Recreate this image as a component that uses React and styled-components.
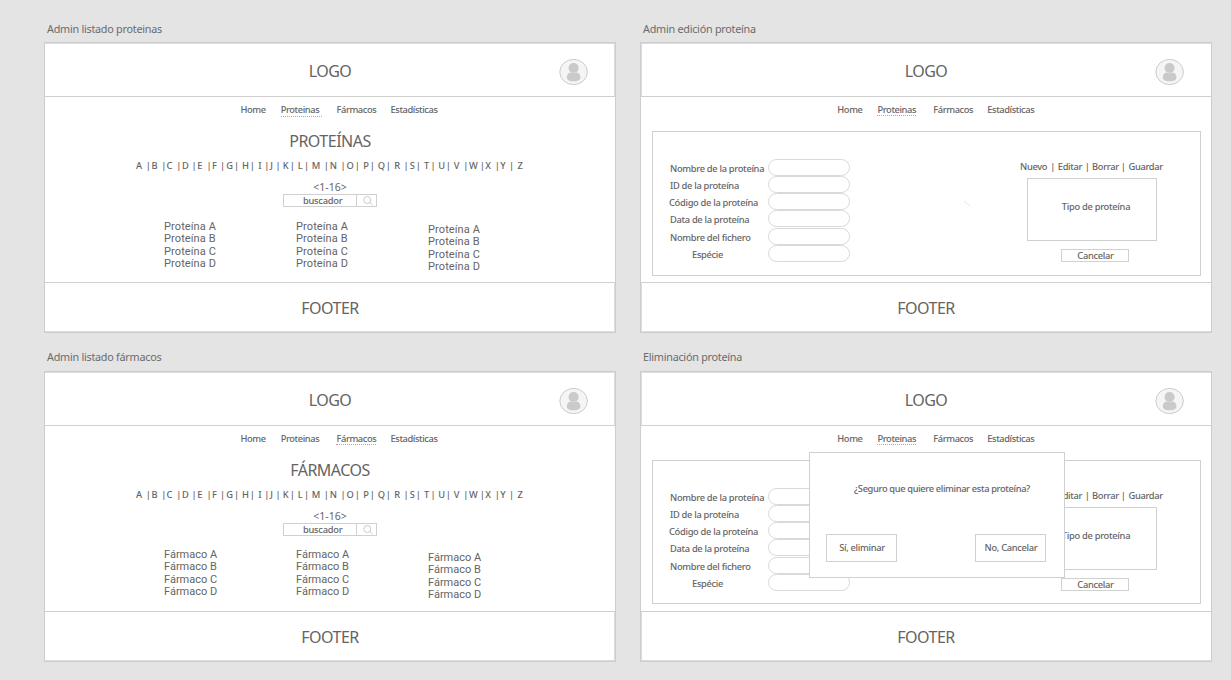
import React from "react";
import styled, { createGlobalStyle } from "styled-components";

const GlobalStyle = createGlobalStyle`
  * { box-sizing: border-box; }
  body {
    margin: 0;
    background: #e4e4e4;
    font-family: "Noto Sans", "Open Sans", sans-serif;
    color: #646464;
    overflow: hidden;
  }
`;

const Board = styled.main`
  display: grid;
  grid-template-columns: 572px 572px;
  grid-template-rows: 329px 329px;
  column-gap: 24px;
  padding: 13px 0 0 44px;
  width: 1231px;
  height: 680px;
`;

const Artboard = styled.section`
  display: flex;
  flex-direction: column;
`;

const Caption = styled.h2`
  margin: 0;
  height: 29px;
  padding-left: 3px;
  font-size: 10.8px;
  font-weight: 400;
  line-height: ${(p) => p.$line || 31}px;
  letter-spacing: -0.25px;
  color: #6b6b6b;
  white-space: nowrap;
`;

const Frame = styled.div`
  position: relative;
  display: flex;
  flex-direction: column;
  height: 291px;
  border: 1px solid #cdcdcd;
  background: #fff;
`;

const Header = styled.header`
  display: grid;
  flex: none;
  grid-template-columns: 1fr 60px 1fr;
  height: 54px;
  padding: 1px 26px 0;
  border-bottom: 1px solid #d0d0d0;
  box-shadow: inset ${(p) => p.$edge}px 1px 0 #dcdcdc;
`;

const Heading = styled.div`
  font-size: 16px;
  line-height: ${(p) => p.$line}px;
  letter-spacing: -0.5px;
  text-align: center;
  white-space: nowrap;
`;

const Avatar = styled.svg`
  display: block;
  justify-self: end;
  width: 30px;
  height: 28px;
  margin-top: 14px;
`;

const Nav = styled.nav`
  display: grid;
  flex: none;
  grid-template-columns: 40.2px 55.8px 54px 60px;
  height: 24px;
  padding-left: ${(p) => p.$left}px;
`;

const NavItem = styled.a`
  justify-self: start;
  height: ${(p) => p.$drop || 19}px;
  padding-right: ${(p) => p.$tail || 0}px;
  border-bottom: 1px ${(p) => (p.$active ? "dotted #f08a8a" : "solid transparent")};
  font-size: 9.3px;
  font-weight: 500;
  line-height: 26px;
  letter-spacing: -0.4px;
  white-space: nowrap;
`;

const Content = styled.div`
  flex: none;
  height: 161px;
`;

const Footer = styled.footer`
  flex: none;
  height: 50px;
  border-top: 1px solid #d0d0d0;
  box-shadow: inset ${(p) => p.$edge}px -1px 0 #dcdcdc;
`;

const ListBody = styled.div`
  display: flex;
  flex-direction: column;
  padding-top: 6px;
`;

const Alphabet = styled.div`
  display: flex;
  height: 18px;
  margin-top: 1px;
  padding-left: 91px;
  font-size: 9.3px;
  font-weight: 500;
  line-height: 18px;
`;

const Letter = styled.span`
  flex: none;
  width: ${(p) => p.$width}px;
`;

const Bar = styled.span`
  flex: none;
  width: ${(p) => p.$width}px;
  text-indent: -1.3px;
`;

const Pager = styled.div`
  height: 14px;
  margin-top: 5px;
  font-size: 10.5px;
  line-height: 14px;
  text-align: center;
`;

const Search = styled.div`
  display: grid;
  grid-template-columns: 73px 19px;
  width: 94px;
  height: 13px;
  margin-left: 238px;
  border: 1px solid #d0d0d0;
`;

const SearchText = styled.span`
  padding-left: 19px;
  border-right: 1px solid #d0d0d0;
  font-size: 9.3px;
  font-weight: 500;
  line-height: 12px;
  letter-spacing: -0.25px;
`;

const SearchIcon = styled.svg`
  width: 12px;
  height: 11px;
  margin: 0 0 0 5px;
`;

const Columns = styled.div`
  display: grid;
  grid-template-columns: 132px 132px 132px;
  padding: ${(p) => p.$top}px 0 0 119px;
`;

const List = styled.ul`
  margin: ${(p) => p.$top}px 0 0;
  padding: 0;
  list-style: none;
  font-family: Roboto, sans-serif;
  font-size: 11px;
  line-height: 12.4px;
  letter-spacing: ${(p) => p.$spacing}px;
`;

const EditorBody = styled.div`
  padding-top: 10px;
`;

const Panel = styled.div`
  display: flex;
  width: 549px;
  height: ${(p) => p.$height}px;
  margin-left: 11px;
  border: 1px solid #d0d0d0;
`;

const Form = styled.div`
  width: 367px;
  padding: 27px 0 0 16px;
`;

const Field = styled.label`
  display: grid;
  grid-template-columns: 99px 82px;
  height: 17.15px;
`;

const FieldLabel = styled.span`
  padding-left: ${(p) => p.$indent}px;
  font-size: 9.3px;
  font-weight: 500;
  line-height: 19px;
  letter-spacing: -0.3px;
  white-space: nowrap;
`;

const Pill = styled.span`
  height: 17px;
  border: 1px solid #d9d9d9;
  border-radius: 9px;
`;

const Side = styled.div`
  display: flex;
  flex-direction: column;
`;

const Actions = styled.div`
  display: grid;
  grid-template-columns: 31.5px 6.3px 28.2px 6.1px 30px 6.4px 40px;
  height: 18px;
  margin-top: 26px;
  font-size: 9.3px;
  font-weight: 500;
  line-height: 18px;
  letter-spacing: -0.32px;
  white-space: nowrap;
`;

const TypeBox = styled.div`
  width: 130px;
  height: 63px;
  margin: 2px 0 0 7px;
  border: 1px solid #d0d0d0;
  font-size: 9.3px;
  font-weight: 500;
  line-height: 56px;
  letter-spacing: -0.28px;
  text-align: center;
  padding-left: 8px;
`;

const CancelButton = styled.button`
  width: 68px;
  height: 13px;
  margin: 8px 0 0 41px;
  padding: 0 0 0 1px;
  border: 1px solid #d0d0d0;
  background: transparent;
  color: inherit;
  font-family: inherit;
  font-size: 9.3px;
  font-weight: 500;
  line-height: 12px;
  letter-spacing: -0.3px;
`;

const StrayStroke = styled.svg`
  display: block;
  width: 8px;
  height: 7px;
  margin: -62px 0 0 294px;
`;

const Dialog = styled.div`
  position: absolute;
  top: 80px;
  left: 168px;
  width: 256px;
  height: 126px;
  padding: 27px 18px 0 16px;
  border: 1px solid #d0d0d0;
  background: #fff;
`;

const Question = styled.p`
  margin: 0;
  padding-left: 12px;
  font-size: 9.3px;
  font-weight: 500;
  line-height: 18px;
  letter-spacing: -0.35px;
  text-align: center;
  white-space: nowrap;
`;

const DialogActions = styled.div`
  display: flex;
  justify-content: space-between;
  margin-top: 36px;
`;

const DialogButton = styled.button`
  width: 71px;
  height: 28px;
  padding: 0 0 2px 1px;
  border: 1px solid #d0d0d0;
  background: #fff;
  color: inherit;
  font-family: inherit;
  font-size: 9.3px;
  font-weight: 500;
  letter-spacing: -0.3px;
  white-space: nowrap;
`;

/* letter, distance to its bar, distance from the bar to the next letter */
const LETTERS = [
  ["A", 11, 4.6], ["B", 11, 4], ["C", 11, 4.3], ["D", 11, 4.4], ["E", 10.5, 4.2],
  ["F", 9.3, 5], ["G", 9, 6.7], ["H", 9, 7.3], ["I", 7.3, 4.7], ["J", 6.6, 6],
  ["K", 8.3, 6.7], ["L", 7.4, 6.6], ["M", 13.3, 4.7], ["N", 12, 4.6], ["O", 9.7, 7.3],
  ["P", 7.7, 6.7], ["Q", 9.4, 7.2], ["R", 10.4, 5], ["S", 7.4, 6.9], ["T", 7.7, 6.7],
  ["U", 8.7, 6.6], ["V", 11, 4.3], ["W", 12, 4.4], ["X", 10.6, 4.4], ["Y", 10, 7.3],
];

const FIELDS = [
  ["Nombre de la proteína", 1],
  ["ID de la proteína", 1],
  ["Código de la proteína", 0],
  ["Data de la proteína", 1],
  ["Nombre del fichero", 1],
  ["Espécie", 23],
];

function SiteFrame({ navLeft, edge, active, drop, tail, children, overlay }) {
  return (
    <Frame>
      <Header $edge={edge}>
        <span />
        <Heading $line={55}>LOGO</Heading>
        <Avatar viewBox="0 0 30 28">
          <ellipse cx="14.6" cy="14" rx="13.8" ry="12.6" fill="#f5f5f5" stroke="#c6c6c6" strokeWidth="0.9" />
          <circle cx="14.6" cy="10" r="5.1" fill="#cacaca" />
          <path d="M7.8 19.4c0-3 2-4.8 4-4.8 1.8.9 3.8.9 5.6 0 2 0 4 1.8 4 4.8 0 5.2-13.6 5.2-13.6 0z" fill="#cacaca" />
        </Avatar>
      </Header>
      <Nav $left={navLeft}>
        {["Home", "Proteinas", "Fármacos", "Estadísticas"].map((name) => (
          <NavItem key={name} $active={name === active} $drop={drop} $tail={name === active ? tail : 0}>
            {name}
          </NavItem>
        ))}
      </Nav>
      <Content>{children}</Content>
      <Footer $edge={edge}>
        <Heading $line={51}>FOOTER</Heading>
      </Footer>
      {overlay}
    </Frame>
  );
}

function Listing({ title, item, top, spacing }) {
  return (
    <ListBody>
      <Heading $line={29}>{title}</Heading>
      <Alphabet>
        {LETTERS.map(([letter, toBar, toNext]) => (
          <React.Fragment key={letter}>
            <Letter $width={toBar}>{letter}</Letter>
            <Bar $width={toNext}>|</Bar>
          </React.Fragment>
        ))}
        <Letter $width={8}>Z</Letter>
      </Alphabet>
      <Pager>&lt;1-16&gt;</Pager>
      <Search>
        <SearchText>buscador</SearchText>
        <SearchIcon viewBox="0 0 12 11" fill="none" stroke="#c4c4c4" strokeWidth="0.9">
          <circle cx="5.3" cy="5" r="3.5" />
          <path d="M7.8 7.5L10.5 10" />
        </SearchIcon>
      </Search>
      <Columns $top={top}>
        {[0, 0, 3].map((offset, i) => (
          <List key={i} $top={offset} $spacing={spacing}>
            {["A", "B", "C", "D"].map((k) => (
              <li key={k}>{item} {k}</li>
            ))}
          </List>
        ))}
      </Columns>
    </ListBody>
  );
}

function Editor({ height = 145 }) {
  return (
    <EditorBody>
      <Panel $height={height}>
        <Form>
          {FIELDS.map(([label, indent]) => (
            <Field key={label}>
              <FieldLabel $indent={indent}>{label}</FieldLabel>
              <Pill />
            </Field>
          ))}
          <StrayStroke viewBox="0 0 8 7">
            <path d="M1 1L7 6" stroke="#dedede" strokeWidth="0.8" />
          </StrayStroke>
        </Form>
        <Side>
          <Actions>
            <span>Nuevo</span><Bar>|</Bar>
            <span>Editar</span><Bar>|</Bar>
            <span>Borrar</span><Bar>|</Bar>
            <span>Guardar</span>
          </Actions>
          <TypeBox>Tipo de proteína</TypeBox>
          <CancelButton>Cancelar</CancelButton>
        </Side>
      </Panel>
    </EditorBody>
  );
}

export default function App() {
  return (
    <>
      <GlobalStyle />
      <Board>
        <Artboard>
          <Caption>Admin listado proteinas</Caption>
          <SiteFrame navLeft={195.5} edge={-1} active="Proteinas" drop={20} tail={3}>
            <Listing title="PROTEÍNAS" item="Proteína" top={14} spacing={0.1} />
          </SiteFrame>
        </Artboard>
        <Artboard>
          <Caption>Admin edición proteína</Caption>
          <SiteFrame navLeft={196.3} edge={1} active="Proteinas">
            <Editor />
          </SiteFrame>
        </Artboard>
        <Artboard>
          <Caption $line={29}>Admin listado fármacos</Caption>
          <SiteFrame navLeft={195.5} edge={-1} active="Fármacos">
            <Listing title="FÁRMACOS" item="Fármaco" top={13} spacing={0} />
          </SiteFrame>
        </Artboard>
        <Artboard>
          <Caption $line={29}>Eliminación proteína</Caption>
          <SiteFrame
            navLeft={196.3}
            edge={1}
            active="Proteinas"
            overlay={
              <Dialog>
                <Question>¿Seguro que quiere eliminar esta proteína?</Question>
                <DialogActions>
                  <DialogButton>Sí, eliminar</DialogButton>
                  <DialogButton>No, Cancelar</DialogButton>
                </DialogActions>
              </Dialog>
            }
          >
            <Editor height={144} />
          </SiteFrame>
        </Artboard>
      </Board>
    </>
  );
}
